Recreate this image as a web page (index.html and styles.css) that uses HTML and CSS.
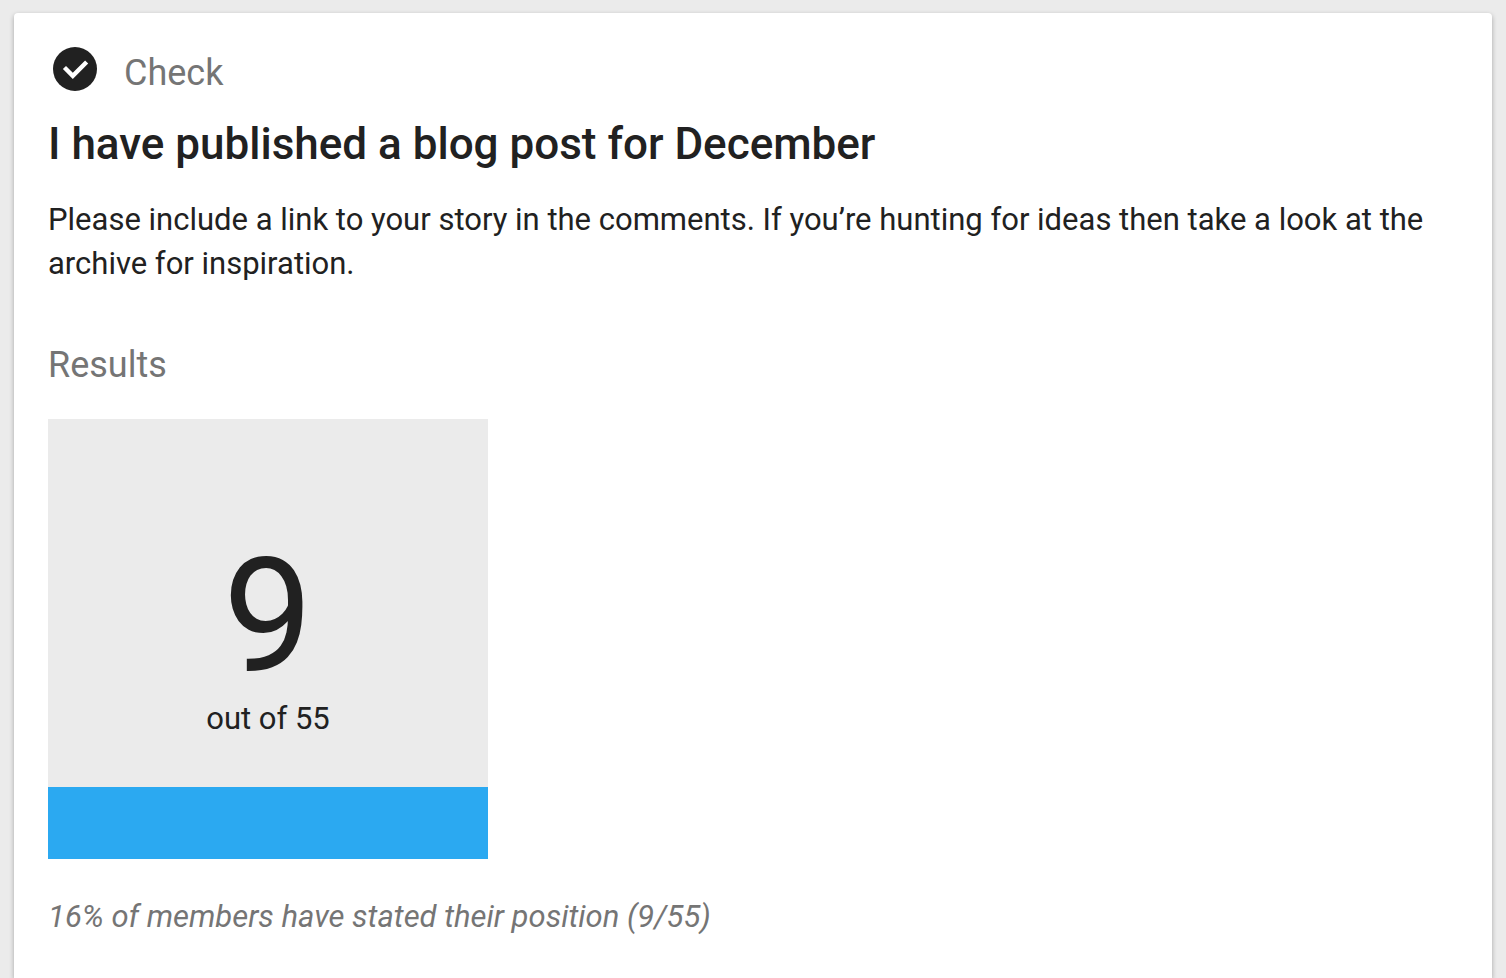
FILE: index.html
```html
<!DOCTYPE html>
<html lang="en">
<head>
<meta charset="utf-8">
<meta name="viewport" content="width=device-width, initial-scale=1">
<title>Check: I have published a blog post for December</title>
<link rel="stylesheet" href="styles.css">
</head>
<body>
<main class="card">
  <header class="card-header">
    <svg class="check-icon" viewBox="2 2 20 20" aria-hidden="true">
      <circle cx="12" cy="12" r="10" fill="#212121"/>
      <path d="M11 16.5L18 9.5L16.59 8.09L11 13.67L7.91 10.59L6.5 12Z" fill="#fff"/>
    </svg>
    <span class="card-type">Check</span>
  </header>
  <h1 class="title">I have published a blog post for December</h1>
  <p class="details">Please include a link to your story in the comments. If you’re hunting for ideas then take a look at the archive for inspiration.</p>
  <h2 class="results-heading">Results</h2>
  <section class="progress">
    <div class="progress-fill" style="height: 16.36%"></div>
    <div class="progress-text">
      <span class="count">9</span>
      <span class="total">out of 55</span>
    </div>
  </section>
  <p class="participation">16% of members have stated their position (9/55)</p>
</main>
</body>
</html>
```
FILE: styles.css
```css
* {
  box-sizing: border-box;
}

body {
  display: flex;
  min-height: 100vh;
  margin: 0;
  padding: 13px 14px 0;
  background: #ebebeb;
  color: #212121;
  font-family: Roboto, sans-serif;
  font-size: 31px;
  line-height: 44px;
}

.card {
  flex: 1;
  padding: 34px 34px 36px;
  border-radius: 4px 4px 0 0;
  background: #fff;
  box-shadow: 0 2px 5px rgba(0, 0, 0, 0.3);
}

.card-header {
  display: flex;
  align-items: flex-start;
  gap: 27px;
  padding-left: 5px;
}

.check-icon {
  width: 44px;
  height: 44px;
}

.card-type,
.results-heading {
  color: #757575;
  font-size: 36px;
  font-weight: 400;
}

.card-type {
  padding-top: 4px;
}

.title {
  margin: 21px 0 0;
  font-size: 44px;
  font-weight: 500;
  line-height: 56px;
}

.details {
  margin: 26px 0 0;
}

.results-heading {
  margin: 57px 0 0;
}

.progress {
  position: relative;
  display: flex;
  width: 440px;
  max-width: 100%;
  aspect-ratio: 1;
  margin-top: 32px;
  background: #ebebeb;
}

.progress-fill {
  position: absolute;
  right: 0;
  bottom: 0;
  left: 0;
  background: #2ba9f1;
}

.progress-text {
  display: flex;
  flex: 1;
  flex-direction: column;
  align-items: center;
  justify-content: center;
}

.count {
  font-size: 160px;
  line-height: 160px;
}

.participation {
  margin: 36px 0 0;
  color: #757575;
  font-style: italic;
}
```
